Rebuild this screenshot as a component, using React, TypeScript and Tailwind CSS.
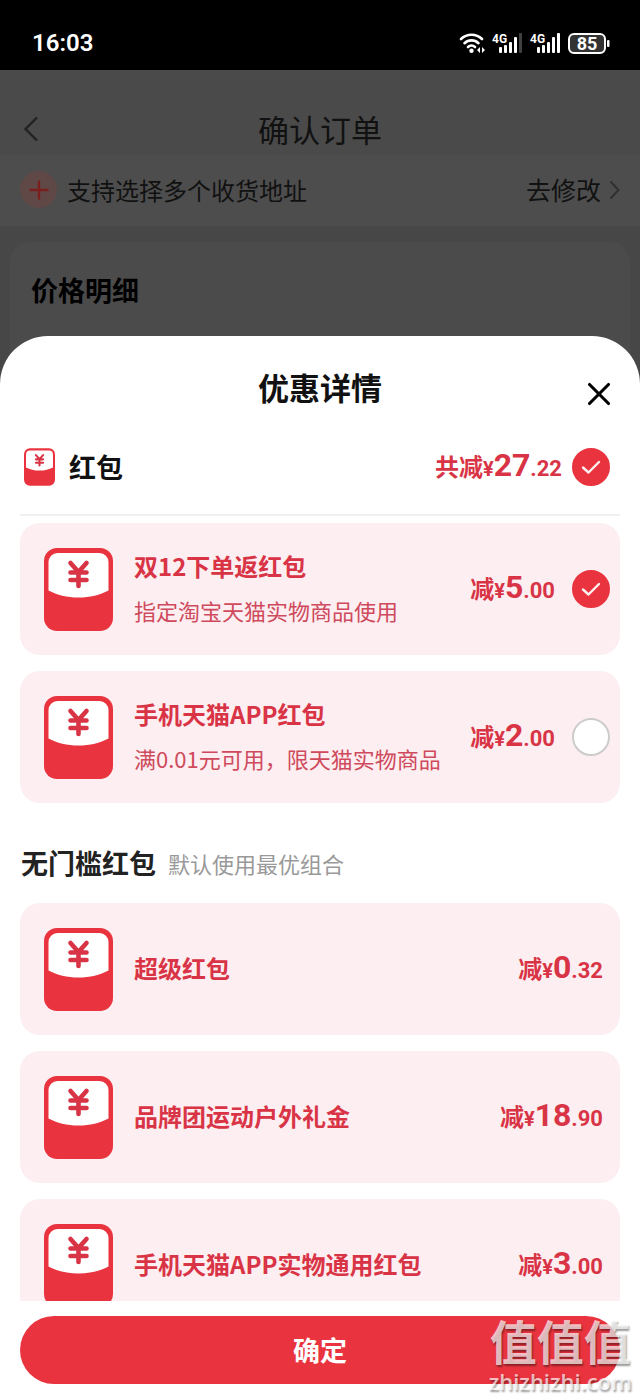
import { X } from "lucide-react"

type Coupon = {
  id: string
  title: string
  note?: string
  amount: string
  checked?: boolean
}

const coupons: Coupon[] = [
  { id: "double12", title: "双12下单返红包", note: "指定淘宝天猫实物商品使用", amount: "5.00", checked: true },
  { id: "tmall-app", title: "手机天猫APP红包", note: "满0.01元可用，限天猫实物商品", amount: "2.00", checked: false },
]

const freeCoupons: Coupon[] = [
  { id: "super", title: "超级红包", amount: "0.32" },
  { id: "outdoor", title: "品牌团运动户外礼金", amount: "18.90" },
  { id: "general", title: "手机天猫APP实物通用红包", amount: "3.00" },
]

function SignalIcon({ full }: { full: boolean }) {
  return (
    <svg width="31" height="24" viewBox="0 0 31 24" fill="white" aria-hidden="true">
      <text x="0" y="12" fontSize="12" fontWeight="700" fontFamily="Roboto">4G</text>
      <rect x="7" y="16" width="3" height="6" rx="1" />
      <rect x="12" y="14" width="3" height="8" rx="1" />
      <rect x="17" y="11" width="3" height="11" rx="1" />
      <rect x="22" y="6" width="3" height="16" rx="1" />
      <rect x="27" y="2" width="3" height="20" rx="1" opacity={full ? 1 : 0.25} />
    </svg>
  )
}

function StatusBar() {
  return (
    <div className="flex h-[70px] shrink-0 items-center justify-between bg-black pt-4 pr-[30px] pl-8 text-white">
      <span className="font-['Roboto'] text-2xl font-semibold">16:03</span>
      <div className="flex items-center gap-[7px]">
        <svg width="26" height="22" viewBox="0 0 26 22" fill="none" stroke="white" strokeWidth="2.6" strokeLinecap="round" aria-hidden="true">
          <path d="M2 7a15 15 0 0 1 21 0" />
          <path d="M5.500 11.200a10 10 0 0 1 14 0" />
          <path d="M9 15a5 5 0 0 1 7 0" />
          <circle cx="12.500" cy="18.800" r="2.200" fill="white" stroke="none" />
          <path d="M21 15v6l-3-3zM23 15v6l3-3z" fill="white" stroke="none" />
        </svg>
        <SignalIcon full={false} />
        <SignalIcon full />
        <svg width="42" height="22" viewBox="0 0 42 22" aria-hidden="true">
          <rect x="1" y="2" width="36" height="19" rx="5" fill="#333" stroke="white" strokeWidth="2" />
          <rect x="39" y="8" width="2.500" height="7" rx="1" fill="white" />
          <text x="19" y="18" textAnchor="middle" fontSize="18" fontWeight="700" fontFamily="Roboto" fill="white">85</text>
        </svg>
      </div>
    </div>
  )
}

function EnvelopeIcon({ className }: { className: string }) {
  return (
    <svg className={className} viewBox="0 0 69 83" aria-hidden="true">
      <rect width="69" height="83" rx="13" fill="#e9343f" />
      <path d="M13.500 5h42a9 9 0 0 1 9 9v28.500c-8.500 4.500-18.500 7-30 7s-21.500-2.500-30-7V14a9 9 0 0 1 9-9z" fill="white" />
      <path d="M26.500 15l8 9 8-9M26.500 24.500h16M26.500 32h16M34.500 24v14" fill="none" stroke="#d93446" strokeWidth="4.600" strokeLinecap="round" strokeLinejoin="round" />
    </svg>
  )
}

function Price({ label, amount }: { label: string; amount: string }) {
  const [whole, cents] = amount.split(".")
  return (
    <span className="pb-0.5 text-2xl leading-[44px] font-bold whitespace-nowrap text-[#d93446]">
      {label}
      <span className="font-['Roboto'] text-xl">¥</span>
      <span className="font-['Roboto'] text-[32px] leading-none">{whole}</span>
      <span className="font-['Roboto'] text-[22px] leading-none">.{cents}</span>
    </span>
  )
}

function RoundCheck({ label, checked }: { label: string; checked: boolean }) {
  return (
    <span className="grid size-[38px] shrink-0 place-items-center">
      <input
        type="checkbox"
        aria-label={label}
        defaultChecked={checked}
        className="peer col-start-1 row-start-1 size-[38px] appearance-none rounded-full border-2 border-[#ccc] bg-white checked:border-[#e9343f] checked:bg-[#e9343f]"
      />
      <svg
        className="pointer-events-none invisible col-start-1 row-start-1 w-5 peer-checked:visible"
        viewBox="0 0 20 16"
        fill="none"
        stroke="#fff0f0"
        strokeWidth="2.400"
        strokeLinecap="round"
        strokeLinejoin="round"
        aria-hidden="true"
      >
        <path d="M2 8.500l5.500 5L18 3" />
      </svg>
    </span>
  )
}

function CouponCard({ coupon }: { coupon: Coupon }) {
  const selectable = coupon.checked !== undefined
  return (
    <li className="flex h-[132px] shrink-0 items-center rounded-[20px] bg-[#fceef1] pr-[10px] pl-6">
      <EnvelopeIcon className="mr-[21px] h-[83px] w-[69px] shrink-0" />
      <div className="min-w-0 flex-1 pb-0.5 whitespace-nowrap text-[#d93446]">
        <h3 className="text-2xl leading-[44px] font-bold">{coupon.title}</h3>
        {coupon.note && <p className="text-[22px] leading-[44px] text-[#cf4a5c]">{coupon.note}</p>}
      </div>
      <div className={selectable ? "flex items-center gap-[17px]" : "flex items-center pr-[7px]"}>
        <Price label="减" amount={coupon.amount} />
        {selectable && <RoundCheck label={coupon.title} checked={coupon.checked === true} />}
      </div>
    </li>
  )
}

export default function App() {
  return (
    <div className="relative flex h-screen flex-col overflow-hidden bg-[#474747] font-['Noto_Sans_CJK_SC',sans-serif] text-[#111]">
      <StatusBar />

      <header className="grid h-[85px] shrink-0 grid-cols-[42px_1fr_42px] items-center bg-[#4a4a4a] px-[10px] pt-8">
        <button type="button" aria-label="返回" className="grid place-items-center">
          <svg className="h-[26px] w-4" viewBox="0 0 16 26" fill="none" stroke="#222" strokeWidth="2.400" aria-hidden="true">
            <path d="M14 1.500L2.500 13 14 24.500" />
          </svg>
        </button>
        <h1 className="text-center text-[31px] leading-[50px]">确认订单</h1>
      </header>

      <div className="flex h-[71px] shrink-0 items-center bg-[#4d4d4d] pr-5 pb-0.5 pl-5">
        <span className="mr-[10px] grid size-[37px] place-items-center rounded-full bg-[#5f4846]">
          <svg className="size-5" viewBox="0 0 20 20" stroke="#7a1f1d" strokeWidth="2.400" strokeLinecap="round" aria-hidden="true">
            <path d="M10 1.500v17M1.500 10h17" />
          </svg>
        </span>
        <span className="flex-1 text-2xl">支持选择多个收货地址</span>
        <a href="#address" className="flex items-center gap-2 text-[25px]">
          去修改
          <svg className="h-5 w-[11px]" viewBox="0 0 11 20" fill="none" stroke="#303030" strokeWidth="2" aria-hidden="true">
            <path d="M1.500 1.500L9.500 10l-8 8.500" />
          </svg>
        </a>
      </div>

      <section className="mx-[10px] mt-4 h-[142px] shrink-0 rounded-t-[20px] bg-[#4b4b4b] px-[21px] pt-7">
        <h2 className="text-[27px] leading-10 font-bold text-black">价格明细</h2>
      </section>

      <div role="dialog" aria-labelledby="sheet-title" className="-mt-12 flex min-h-0 flex-1 flex-col rounded-t-[48px] bg-white">
        <div className="grid h-[104px] shrink-0 grid-cols-[42px_1fr_42px] items-center px-5">
          <h2 id="sheet-title" className="col-start-2 pb-0.5 text-center text-[31px] leading-[50px] font-bold">优惠详情</h2>
          <button type="button" aria-label="关闭" className="grid place-items-center pt-3 text-black">
            <X className="size-[38px]" strokeWidth={2} />
          </button>
        </div>

        <div className="mx-5 mb-[7px] flex h-[76px] shrink-0 items-center border-b-2 border-[#f0f0f0] pr-[10px] pb-5 pl-1">
          <EnvelopeIcon className="mr-[14px] h-[38px] w-[31px]" />
          <h3 className="flex-1 text-[27px] font-bold">红包</h3>
          <div className="flex items-center gap-[10px]">
            <Price label="共减" amount="27.22" />
            <RoundCheck label="红包" checked />
          </div>
        </div>

        <div className="min-h-0 flex-1 overflow-y-auto px-5 [scrollbar-width:none]">
          <ul className="flex flex-col gap-4">
            {coupons.map((coupon) => (
              <CouponCard key={coupon.id} coupon={coupon} />
            ))}
          </ul>
          <div className="mt-[38px] mb-[18px] flex items-center gap-3 pl-px">
            <h3 className="text-[27px] leading-[44px] font-bold text-[#222]">无门槛红包</h3>
            <span className="text-[22px] leading-[44px] text-[#999]">默认使用最优组合</span>
          </div>
          <ul className="flex flex-col gap-4">
            {freeCoupons.map((coupon) => (
              <CouponCard key={coupon.id} coupon={coupon} />
            ))}
          </ul>
        </div>

        <div className="shrink-0 px-5 pt-[15px] pb-4">
          <button type="button" className="h-[68px] w-full rounded-full bg-[#e9343f] text-[27px] font-bold text-white">
            确定
          </button>
        </div>
      </div>

      <div className="pointer-events-none absolute right-2 bottom-[7px] text-center text-white/70 [text-shadow:1px_2px_2px_rgba(0,0,0,0.4)]">
        <p className="mb-1 text-[47px] leading-[50px] font-bold">值值值</p>
        <p className="font-['Open_Sans'] text-[22px] leading-6 font-semibold">zhizhizhi.com</p>
      </div>
    </div>
  )
}
